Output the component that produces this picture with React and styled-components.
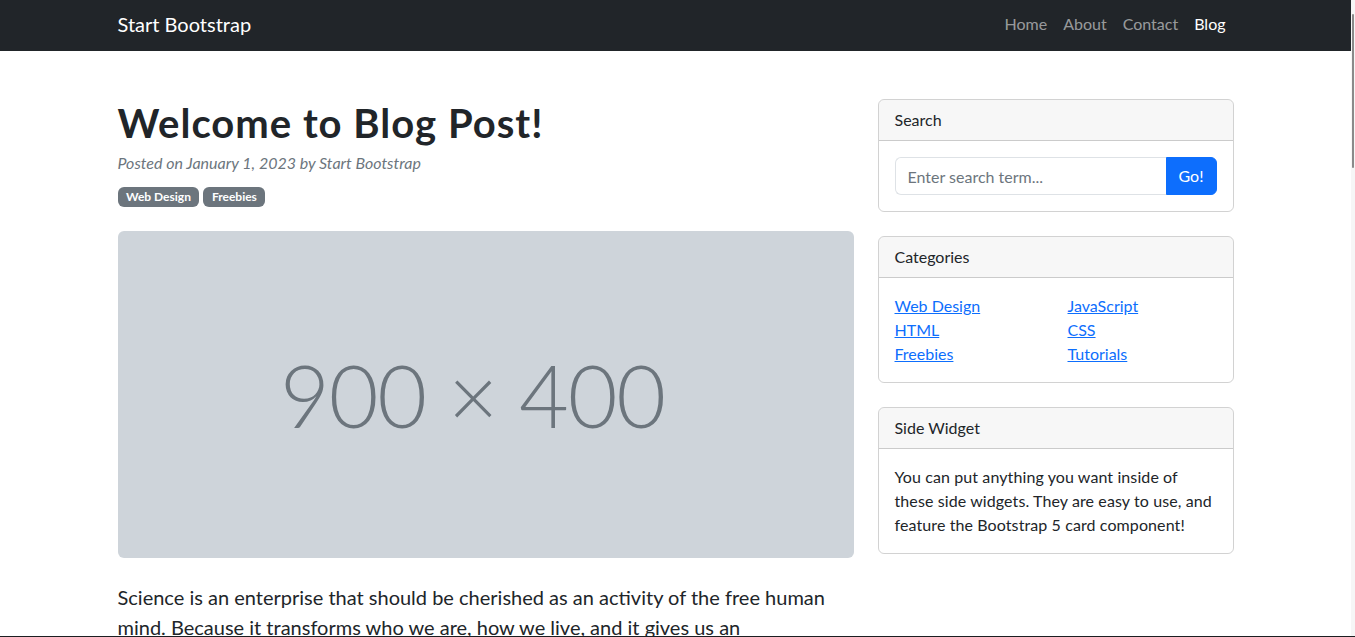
import React from "react";
import styled, { createGlobalStyle } from "styled-components";

const Global = createGlobalStyle`
  *, *::before, *::after { box-sizing: border-box; }
  html, body { margin: 0; padding: 0; }
  body {
    font-family: Lato, "Liberation Sans", sans-serif;
    font-size: 16px;
    line-height: 1.5;
    color: #212529;
    background: #fff;
    overflow: hidden;
  }
`;

const Frame = styled.div`
  display: flex;
  height: 637px;
  border-bottom: 1px solid #1b1e21;
  overflow: hidden;
`;

const Page = styled.div`
  flex: 1;
  min-width: 0;
`;

const ScrollTrack = styled.div`
  position: relative;
  width: 4px;
  background: #f6f6f6;
`;

const ScrollThumb = styled.div`
  position: absolute;
  top: 14px;
  left: 1px;
  width: 2px;
  height: 154px;
  background: #8a8a8a;
  border-radius: 1px;
`;

const NavBar = styled.nav`
  height: 51px;
  padding-bottom: 4px;
  background: #212529;
  display: flex;
  align-items: center;
`;

const Container = styled.div`
  width: 1140px;
  margin: 0 auto;
  padding: 0 12px;
  display: flex;
  align-items: center;
  justify-content: ${(p) => p.$justify || "flex-start"};
`;

const Brand = styled.a`
  font-size: 20px;
  line-height: 30px;
  color: #fff;
  text-decoration: none;
`;

const NavList = styled.ul`
  list-style: none;
  margin: 0;
  padding: 0;
  display: flex;
`;

const NavLink = styled.a`
  display: block;
  padding: 8px;
  font-size: 16px;
  line-height: 24px;
  text-decoration: none;
  color: ${(p) => (p.$active ? "#fff" : "rgba(255,255,255,0.55)")};
`;

const Main = styled.div`
  width: 1140px;
  margin: 48px auto 0;
  padding: 0 12px;
  display: grid;
  grid-template-columns: 736px 356px;
  column-gap: 24px;
  align-items: start;
`;

const Article = styled.article``;

const Title = styled.h1`
  margin: 0 0 4px;
  font-size: 40px;
  line-height: 48px;
  font-weight: 700;
  letter-spacing: 1px;
  color: #212529;
`;

const Meta = styled.div`
  color: #6c757d;
  font-style: italic;
  margin-bottom: 8px;
`;

const Badges = styled.div`
  line-height: 24px;
  margin-bottom: 24px;
`;

const Badge = styled.a`
  display: inline-block;
  margin-right: 4px;
  padding: 4.2px 8.5px;
  font-size: 12px;
  font-weight: 700;
  line-height: 1;
  color: #fff;
  background: #6c757d;
  border-radius: 6px;
  text-decoration: none;
  vertical-align: baseline;
`;

const Placeholder = styled.figure`
  margin: 0 0 24px;
  height: 327px;
  background: #ced4da;
  border-radius: 6px;
  display: flex;
  align-items: center;
  justify-content: center;
  padding-right: 26px;
  color: #6c757d;
  font-family: Lato, "Open Sans", sans-serif;
  font-weight: 300;
  font-size: 86px;
  letter-spacing: -1.2px;
`;

const Paragraph = styled.p`
  margin: 0 0 24px;
  font-size: 20px;
  line-height: 30px;
`;

const Sidebar = styled.aside`
  display: flex;
  flex-direction: column;
  gap: 24px;
`;

const Card = styled.div`
  border: 1px solid rgba(0, 0, 0, 0.175);
  border-radius: 6px;
  overflow: hidden;
`;

const CardHeader = styled.div`
  padding: 8px 16px;
  background: rgba(0, 0, 0, 0.03);
  border-bottom: 1px solid rgba(0, 0, 0, 0.175);
`;

const CardBody = styled.div`
  padding: 16px;
`;

const WidgetText = styled.p`
  margin: 0;
  letter-spacing: 0.1px;
`;

const InputGroup = styled.div`
  display: flex;
`;

const SearchInput = styled.input`
  flex: 1;
  min-width: 0;
  height: 38px;
  padding: 6px 12px;
  font: inherit;
  color: #212529;
  border: 1px solid #dee2e6;
  border-right: none;
  border-radius: 6px 0 0 6px;
  outline: none;
  &::placeholder { color: #6c757d; opacity: 1; }
`;

const GoButton = styled.button`
  height: 38px;
  padding: 6px 12px;
  font: inherit;
  color: #fff;
  background: #0d6efd;
  border: 1px solid #0d6efd;
  border-radius: 0 6px 6px 0;
`;

const CatGrid = styled.div`
  display: grid;
  grid-template-columns: 1fr 1fr;
  column-gap: 24px;
`;

const CatList = styled.ul`
  list-style: none;
  margin: 0;
  padding: 0;
`;

const CatLink = styled.a`
  color: #0d6efd;
  text-decoration: underline;
`;

const categories = [
  ["Web Design", "HTML", "Freebies"],
  ["JavaScript", "CSS", "Tutorials"],
];

export default function App() {
  return (
    <>
      <Global />
      <Frame>
        <Page>
          <NavBar>
            <Container $justify="space-between">
              <Brand href="#">Start Bootstrap</Brand>
              <NavList>
                <li><NavLink href="#">Home</NavLink></li>
                <li><NavLink href="#">About</NavLink></li>
                <li><NavLink href="#">Contact</NavLink></li>
                <li><NavLink href="#" $active>Blog</NavLink></li>
              </NavList>
            </Container>
          </NavBar>
          <Main>
            <Article>
              <header>
                <Title>Welcome to Blog Post!</Title>
                <Meta>Posted on January 1, 2023 by Start Bootstrap</Meta>
                <Badges>
                  <Badge href="#">Web Design</Badge>
                  <Badge href="#">Freebies</Badge>
                </Badges>
              </header>
              <Placeholder>900 × 400</Placeholder>
              <section>
                <Paragraph>
                  Science is an enterprise that should be cherished as an activity of the free human
                  mind. Because it transforms who we are, how we live, and it gives us an
                  understanding of our place in the universe.
                </Paragraph>
              </section>
            </Article>
            <Sidebar>
              <Card>
                <CardHeader>Search</CardHeader>
                <CardBody>
                  <InputGroup>
                    <SearchInput type="text" placeholder="Enter search term..." />
                    <GoButton type="button">Go!</GoButton>
                  </InputGroup>
                </CardBody>
              </Card>
              <Card>
                <CardHeader>Categories</CardHeader>
                <CardBody>
                  <CatGrid>
                    {categories.map((col, i) => (
                      <CatList key={i}>
                        {col.map((c) => (
                          <li key={c}><CatLink href="#">{c}</CatLink></li>
                        ))}
                      </CatList>
                    ))}
                  </CatGrid>
                </CardBody>
              </Card>
              <Card>
                <CardHeader>Side Widget</CardHeader>
                <CardBody>
                  <WidgetText>
                    You can put anything you want inside of these side widgets. They are easy to
                    use, and feature the Bootstrap 5 card component!
                  </WidgetText>
                </CardBody>
              </Card>
            </Sidebar>
          </Main>
        </Page>
        <ScrollTrack>
          <ScrollThumb />
        </ScrollTrack>
      </Frame>
    </>
  );
}
